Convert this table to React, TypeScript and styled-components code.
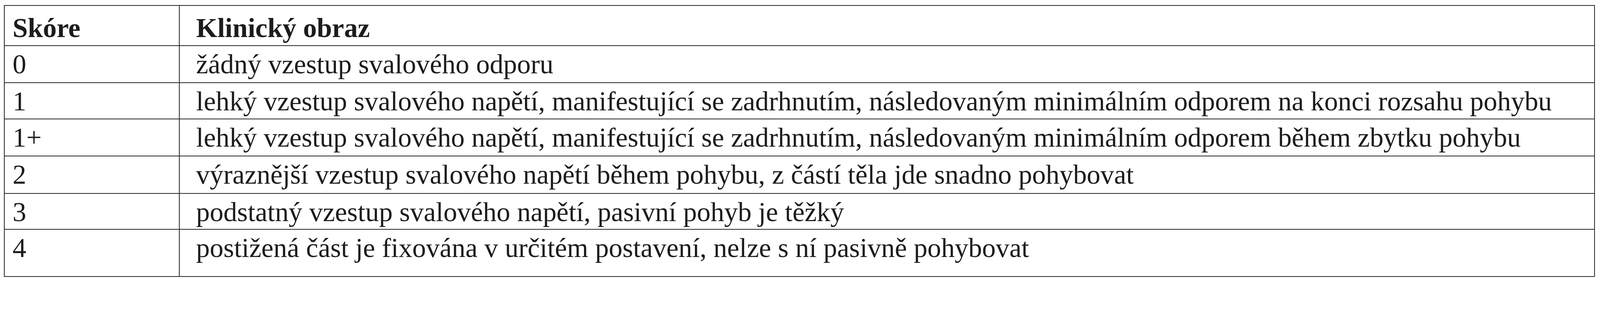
import React from 'react';
import styled, {createGlobalStyle} from 'styled-components';

// sizes are measured on a 4474px wide frame; scale them with the viewport
const v = (px: number) => `${(px / 4474) * 100}vw`;

const line = `${v(3)} solid #262626`;

const GlobalStyle = createGlobalStyle`
  html, body {
    margin: 0;
    padding: 0;
    background: #ffffff;
    overflow: hidden;
  }
  body {
    font-family: "Liberation Serif", "Times New Roman", serif;
    color: #1c1c1c;
  }
`;

const Page = styled.div`
  padding: ${v(14)} 0 0 ${v(11)};
`;

const Table = styled.div`
  width: ${v(4449)};
  box-sizing: border-box;
  border: ${line};
  display: flex;
  flex-direction: column;
`;

const Row = styled.div<{$h: number; $head?: boolean}>`
  display: grid;
  grid-template-columns: ${v(487)} 1fr;
  height: ${p => v(p.$h)};
  border-top: ${p => (p.$head ? 'none' : line)};
  font-size: ${v(76.4)};
  line-height: ${v(78)};
  font-weight: ${p => (p.$head ? 700 : 400)};
`;

const ScoreCell = styled.div<{$head?: boolean}>`
  padding: ${p => v(p.$head ? 23 : 12)} 0 0 ${v(22)};
  white-space: nowrap;
  overflow: hidden;
`;

const TextCell = styled.div<{$head?: boolean}>`
  border-left: ${line};
  padding: ${p => v(p.$head ? 23 : 12)} 0 0 ${v(46)};
  white-space: nowrap;
  overflow: hidden;
`;

type Item = {score: string; text: string; h: number};

const rows: Item[] = [
  {score: '0', text: 'žádný vzestup svalového odporu', h: 102},
  {score: '1', text: 'lehký vzestup svalového napětí, manifestující se zadrhnutím, následovaným minimálním odporem na konci rozsahu pohybu', h: 99},
  {score: '1+', text: 'lehký vzestup svalového napětí, manifestující se zadrhnutím, následovaným minimálním odporem během zbytku pohybu', h: 102},
  {score: '2', text: 'výraznější vzestup svalového napětí během pohybu, z částí těla jde snadno pohybovat', h: 103},
  {score: '3', text: 'podstatný vzestup svalového napětí, pasivní pohyb je těžký', h: 98},
  {score: '4', text: 'postižená část je fixována v určitém postavení, nelze s ní pasivně pohybovat', h: 130},
];

function App() {
  return (
    <Page>
      <GlobalStyle />
      <Table>
        <Row $h={110} $head>
          <ScoreCell $head>Skóre</ScoreCell>
          <TextCell $head>Klinický obraz</TextCell>
        </Row>
        {rows.map(r => (
          <Row $h={r.h} key={r.score}>
            <ScoreCell>{r.score}</ScoreCell>
            <TextCell>{r.text}</TextCell>
          </Row>
        ))}
      </Table>
    </Page>
  );
}

export default App;
